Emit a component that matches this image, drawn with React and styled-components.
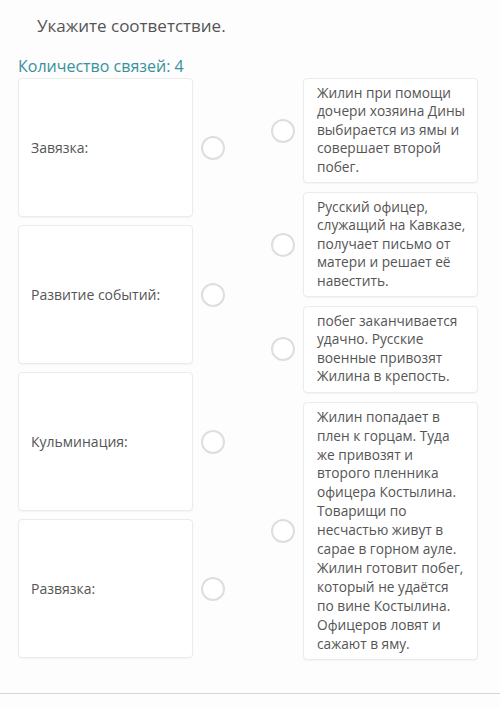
import React from 'react'
import styled, { createGlobalStyle } from 'styled-components'

const Global = createGlobalStyle`
  html, body {
    margin: 0;
    padding: 0;
    background: #fdfdfd;
  }
  body {
    font-family: "Open Sans", "Noto Sans", sans-serif;
    color: #555;
  }
`

const Page = styled.div`
  width: 500px;
  height: 708px;
  overflow: hidden;
  display: flex;
  flex-direction: column;
`

const Title = styled.div`
  font-size: 17px;
  line-height: 23px;
  color: #555;
  padding: 14px 0 0 37px;
`

const Count = styled.div`
  font-size: 16px;
  line-height: 22px;
  color: #37929b;
  padding: 18px 0 0 18px;
`

const Board = styled.div`
  display: flex;
  align-items: flex-start;
  padding: 1px 0 0 18px;
  gap: 46px;
`

const Column = styled.div`
  display: flex;
  flex-direction: column;
  gap: ${p => p.gap}px;
`

const Pair = styled.div`
  display: flex;
  align-items: center;
  gap: 8px;
`

const Card = styled.div`
  box-sizing: border-box;
  width: 175px;
  background: #fff;
  border: 1px solid #ebebeb;
  border-radius: 4px;
  box-shadow: 0 1px 2px rgba(0, 0, 0, 0.04);
  font-size: 14px;
  color: #555;
`

const Label = styled(Card)`
  height: 139px;
  display: flex;
  align-items: center;
  padding: 0 12px;
`

const Answer = styled(Card)`
  padding: 5px 8px 6px 13px;
  font-size: 13.7px;
  line-height: ${p => (p.$long ? 18.9 : 18.4)}px;
`

const Line = styled.div`
  white-space: nowrap;
`

const Dot = styled.div`
  box-sizing: border-box;
  width: 24px;
  height: 24px;
  flex: none;
  border-radius: 50%;
  border: 2px solid #dedede;
  background: #fff;
`

const Rule = styled.div`
  margin-top: auto;
  margin-bottom: 14px;
  height: 1px;
  background: #d6d6d6;
`

const labels = ['Завязка:', 'Развитие событий:', 'Кульминация:', 'Развязка:']

const answers = [
  ['Жилин при помощи', 'дочери хозяина Дины', 'выбирается из ямы и', 'совершает второй', 'побег.'],
  ['Русский офицер,', 'служащий на Кавказе,', 'получает письмо от', 'матери и решает её', 'навестить.'],
  ['побег заканчивается', 'удачно. Русские', 'военные привозят', 'Жилина в крепость.'],
  [
    'Жилин попадает в',
    'плен к горцам. Туда',
    'же привозят и',
    'второго пленника',
    'офицера Костылина.',
    'Товарищи по',
    'несчастью живут в',
    'сарае в горном ауле.',
    'Жилин готовит побег,',
    'который не удаётся',
    'по вине Костылина.',
    'Офицеров ловят и',
    'сажают в яму.',
  ],
]

const App = () => (
  <Page>
    <Global />
    <Title>Укажите соответствие.</Title>
    <Count>Количество связей: 4</Count>
    <Board>
      <Column gap={8}>
        {labels.map(text => (
          <Pair key={text}>
            <Label>{text}</Label>
            <Dot />
          </Pair>
        ))}
      </Column>
      <Column gap={9}>
        {answers.map(lines => (
          <Pair key={lines[0]}>
            <Dot />
            <Answer $long={lines.length > 10}>
              {lines.map(line => (
                <Line key={line}>{line}</Line>
              ))}
            </Answer>
          </Pair>
        ))}
      </Column>
    </Board>
    <Rule />
  </Page>
)

export default App
